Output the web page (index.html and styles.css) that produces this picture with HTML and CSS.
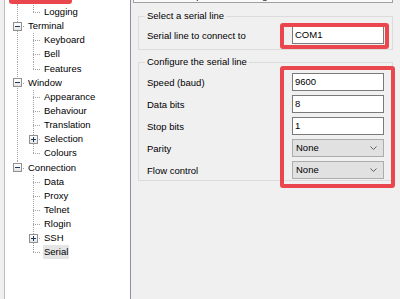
FILE: index.html
```html
<!DOCTYPE html>
<html lang="en">
<head>
  <meta charset="UTF-8">
  <meta name="viewport" content="width=device-width, initial-scale=1.0">
  <title>PuTTY Configuration - Serial</title>
  <link rel="stylesheet" href="styles.css">
</head>
<body>
  <div class="tree">
    <ul class="nodes">
      <li class="row"><span class="cell first"><span class="box"></span></span><span class="label">Session</span></li>
      <li class="row"><span class="cell pipe"></span><span class="cell end"></span><span class="label">Logging</span></li>
      <li class="row"><span class="cell tee"><span class="box"></span></span><span class="label">Terminal</span></li>
      <li class="row"><span class="cell pipe"></span><span class="cell tee"></span><span class="label">Keyboard</span></li>
      <li class="row"><span class="cell pipe"></span><span class="cell tee"></span><span class="label">Bell</span></li>
      <li class="row"><span class="cell pipe"></span><span class="cell end"></span><span class="label">Features</span></li>
      <li class="row"><span class="cell tee"><span class="box"></span></span><span class="label">Window</span></li>
      <li class="row"><span class="cell pipe"></span><span class="cell tee"></span><span class="label">Appearance</span></li>
      <li class="row"><span class="cell pipe"></span><span class="cell tee"></span><span class="label">Behaviour</span></li>
      <li class="row"><span class="cell pipe"></span><span class="cell tee"></span><span class="label">Translation</span></li>
      <li class="row"><span class="cell pipe"></span><span class="cell tee"><span class="box plus"></span></span><span class="label">Selection</span></li>
      <li class="row"><span class="cell pipe"></span><span class="cell end"></span><span class="label">Colours</span></li>
      <li class="row"><span class="cell end"><span class="box"></span></span><span class="label">Connection</span></li>
      <li class="row"><span class="cell"></span><span class="cell tee"></span><span class="label">Data</span></li>
      <li class="row"><span class="cell"></span><span class="cell tee"></span><span class="label">Proxy</span></li>
      <li class="row"><span class="cell"></span><span class="cell tee"></span><span class="label">Telnet</span></li>
      <li class="row"><span class="cell"></span><span class="cell tee"></span><span class="label">Rlogin</span></li>
      <li class="row"><span class="cell"></span><span class="cell tee"><span class="box plus"></span></span><span class="label">SSH</span></li>
      <li class="row"><span class="cell"></span><span class="cell end"></span><span class="label selected">Serial</span></li>
    </ul>
  </div>

  <div class="panel">
    <div class="title">Options controlling local serial lines</div>

    <fieldset class="group group-line">
      <legend>Select a serial line</legend>
      <div class="field">
        <span>Serial line to connect to</span>
        <div class="input">COM1</div>
      </div>
    </fieldset>

    <fieldset class="group group-config">
      <legend>Configure the serial line</legend>
      <div class="fields">
        <div class="field">
          <span>Speed (baud)</span>
          <div class="input">9600</div>
        </div>
        <div class="field">
          <span>Data bits</span>
          <div class="input">8</div>
        </div>
        <div class="field">
          <span>Stop bits</span>
          <div class="input">1</div>
        </div>
        <div class="field">
          <span>Parity</span>
          <div class="input select">
            <span>None</span>
            <svg width="7" height="4" viewBox="0 0 7 4"><path d="M0.5 0.5 L3.5 3.5 L6.5 0.5" fill="none" stroke="#606060" stroke-width="1"/></svg>
          </div>
        </div>
        <div class="field">
          <span>Flow control</span>
          <div class="input select">
            <span>None</span>
            <svg width="7" height="4" viewBox="0 0 7 4"><path d="M0.5 0.5 L3.5 3.5 L6.5 0.5" fill="none" stroke="#606060" stroke-width="1"/></svg>
          </div>
        </div>
      </div>
    </fieldset>
  </div>

  <div class="mark mark-session"></div>
  <div class="mark mark-line"></div>
  <div class="mark mark-config"></div>
</body>
</html>
```

FILE: styles.css
```css
body {
  margin: 0;
  height: 299px;
  overflow: hidden;
  position: relative;
  display: flex;
  background: #f0f0f0;
  font-family: "Liberation Sans", Arial, sans-serif;
  font-size: 9.5px;
  color: #000;
  --vdots: repeating-linear-gradient(to bottom, #a0a0a0 0 1px, transparent 1px 2px);
  --hdots: repeating-linear-gradient(to right, #a0a0a0 0 1px, transparent 1px 2px);
}

/* tree view */
.tree {
  margin-left: 4px;
  width: 127px;
  box-sizing: border-box;
  padding-left: 4px;
  background: #fff;
  border-left: 1px solid #bdbdbd;
  border-right: 1px solid #8b9099;
}
.nodes {
  list-style: none;
  margin: -9.2px 0 0;
  padding: 0;
}
.row {
  display: flex;
  height: 14.15px;
  line-height: 14.15px;
  white-space: nowrap;
}
.cell {
  flex: none;
  width: 16px;
  display: flex;
  align-items: center;
}
.pipe {
  background: var(--vdots) 8px 0 / 1px 100% no-repeat;
}
.tee {
  background: var(--vdots) 8px 0 / 1px 100% no-repeat,
              var(--hdots) 8px 7px / 8px 1px no-repeat;
}
.end {
  background: var(--vdots) 8px 0 / 1px 7px no-repeat,
              var(--hdots) 8px 7px / 8px 1px no-repeat;
}
.first {
  background: var(--vdots) 8px 7px / 1px 8px no-repeat,
              var(--hdots) 8px 7px / 8px 1px no-repeat;
}
.box {
  width: 9px;
  height: 9px;
  box-sizing: border-box;
  margin-left: 4px;
  border: 1px solid #919191;
  background: linear-gradient(#fff, #e4e4e4);
  display: grid;
  place-items: center;
}
.box::before,
.box.plus::after {
  content: "";
  grid-area: 1 / 1;
  background: #1f3a5f;
}
.box::before {
  width: 5px;
  height: 1px;
}
.box.plus::after {
  width: 1px;
  height: 5px;
}
.label {
  margin-left: 2px;
  padding: 0 1px;
}
.selected {
  background: #e5e5e5;
}

/* settings panel */
.panel {
  flex: 1;
  padding: 0 7px 0 2px;
}
.title {
  margin-top: -14px;
  height: 17px;
  box-sizing: border-box;
  padding-top: 2px;
  border: 1px solid #a0a0a0;
  background: #fafafa;
  text-align: center;
  line-height: 14px;
}
.group {
  margin: 7px 0 0 5px;
  border: 1px solid #dcdcdc;
  padding: 4px 0 5px 8px;
  min-width: 0;
}
.group legend {
  padding: 0 2px;
  margin-left: -2px;
  line-height: 12px;
}
.group-config {
  margin-top: 6px;
  padding: 5px 0 1px 8px;
}
.fields {
  display: flex;
  flex-direction: column;
  gap: 4px;
}
.field {
  display: flex;
  align-items: center;
  justify-content: space-between;
  height: 18px;
}
.input {
  width: 92px;
  height: 18px;
  box-sizing: border-box;
  margin-right: 8px;
  padding-left: 2px;
  border: 1px solid #7a7a7a;
  background: #fff;
  line-height: 16px;
}
.select {
  display: flex;
  align-items: center;
  justify-content: space-between;
  padding: 0 6px 0 3px;
  border-color: #adadad;
  background: #e1e1e1;
}

/* red highlight annotations */
.mark {
  position: absolute;
  box-sizing: border-box;
  border: 4px solid #e9474d;
  border-radius: 3px;
}
.mark-session {
  left: 9px;
  top: -20px;
  width: 63px;
  height: 24px;
}
.mark-line {
  left: 280px;
  top: 23px;
  width: 109px;
  height: 26px;
}
.mark-config {
  left: 280px;
  top: 66px;
  width: 115px;
  height: 122px;
}
```
